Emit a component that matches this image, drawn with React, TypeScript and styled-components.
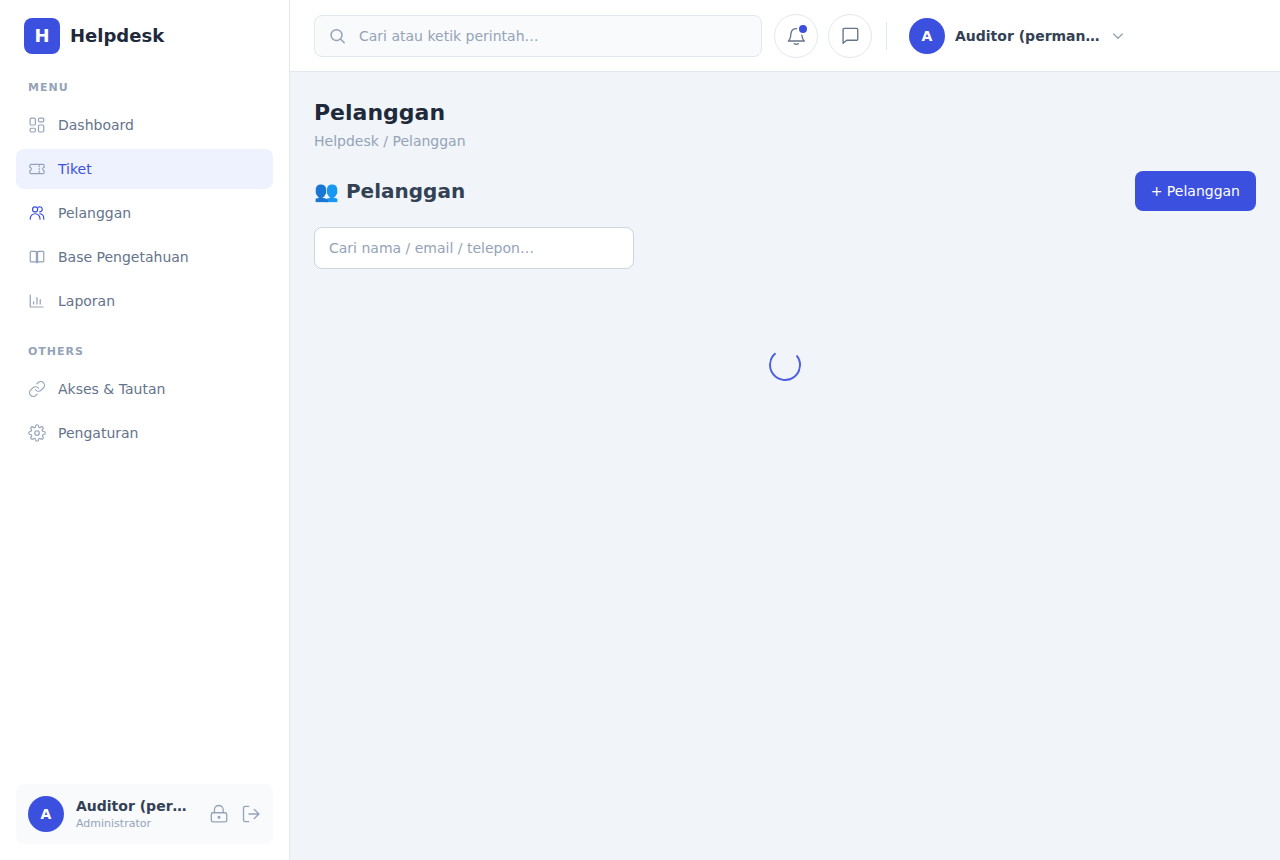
import React from "react";
import styled, { createGlobalStyle } from "styled-components";

const c = {
  primary: "#3c50e0",
  primarySoft: "#eef2ff",
  ink: "#1e293b",
  heading: "#334155",
  text: "#64748b",
  muted: "#94a3b8",
  line: "#e2e8f0",
  inputLine: "#cbd5e1",
  soft: "#f8fafc",
  page: "#f1f5f9",
};

const GlobalStyle = createGlobalStyle`
  *, *::before, *::after { box-sizing: border-box; }
  body {
    margin: 0;
    background: ${c.page};
    color: ${c.ink};
    font-family: "DejaVu Sans", Verdana, sans-serif;
    font-size: 14px;
    line-height: 20px;
  }
  button, input { font: inherit; }
  button { cursor: pointer; }
  h1, h2, p, ul { margin: 0; padding: 0; }
`;

const Shell = styled.div`
  display: grid;
  grid-template-columns: 290px minmax(0, 1fr);
  min-height: 100vh;
`;

const Sidebar = styled.aside`
  display: flex;
  flex-direction: column;
  height: 100vh;
  position: sticky;
  top: 0;
  padding: 18px 16px 16px;
  background: #fff;
  border-right: 1px solid ${c.line};
`;

const Brand = styled.a`
  display: flex;
  align-items: center;
  gap: 10px;
  padding: 0 8px;
  color: ${c.ink};
  font-size: 18px;
  font-weight: 700;
  text-decoration: none;
`;

const BrandMark = styled.span`
  display: grid;
  place-items: center;
  width: 36px;
  height: 36px;
  border-radius: 8px;
  background: ${c.primary};
  color: #fff;
`;

const Nav = styled.nav`
  display: flex;
  flex-direction: column;
  gap: 21px;
  flex: 1;
  padding-top: 24px;
`;

const NavTitle = styled.h2`
  padding: 0 12px;
  margin-bottom: 7px;
  color: ${c.muted};
  font-size: 11px;
  font-weight: 700;
  letter-spacing: 1px;
  text-transform: uppercase;
`;

const NavList = styled.ul`
  display: flex;
  flex-direction: column;
  gap: 4px;
  list-style: none;
`;

const NavLink = styled.a<{ $active?: boolean; $iconActive?: boolean }>`
  display: flex;
  align-items: center;
  gap: 12px;
  height: 40px;
  padding: 0 12px;
  border-radius: 8px;
  background: ${(p) => (p.$active ? c.primarySoft : "transparent")};
  color: ${(p) => (p.$active ? c.primary : c.text)};
  text-decoration: none;

  svg {
    color: ${(p) => (p.$iconActive ? c.primary : c.muted)};
  }
`;

const Glyph = styled.svg`
  display: block;
  flex: none;
  fill: none;
  stroke: currentColor;
  stroke-linecap: round;
  stroke-linejoin: round;
`;

const Avatar = styled.span`
  display: grid;
  place-items: center;
  flex: none;
  width: 36px;
  height: 36px;
  border-radius: 50%;
  background: ${c.primary};
  color: #fff;
  font-size: 14px;
  font-weight: 700;
`;

const UserCard = styled.div`
  display: flex;
  align-items: center;
  gap: 12px;
  padding: 12px;
  border-radius: 8px;
  background: ${c.soft};
`;

const UserText = styled.div`
  flex: 1;
  min-width: 0;
`;

const UserName = styled.p`
  overflow: hidden;
  color: ${c.heading};
  font-weight: 700;
  text-overflow: ellipsis;
  white-space: nowrap;
`;

const UserRole = styled.p`
  color: ${c.muted};
  font-size: 11px;
  line-height: 16px;
`;

const CardActions = styled.div`
  display: flex;
  gap: 12px;
  padding-left: 4px;
`;

const PlainButton = styled.button`
  padding: 0;
  border: 0;
  background: none;
  color: ${c.muted};
`;

const Column = styled.div`
  display: flex;
  flex-direction: column;
  min-width: 0;
`;

const Header = styled.header`
  display: flex;
  align-items: center;
  gap: 12px;
  height: 72px;
  padding: 0 24px;
  background: #fff;
  border-bottom: 1px solid ${c.line};
`;

const SearchBox = styled.label`
  display: flex;
  align-items: center;
  gap: 12px;
  flex: 0 1 448px;
  height: 42px;
  padding: 0 14px;
  border: 1px solid ${c.line};
  border-radius: 8px;
  background: ${c.soft};
  color: ${c.muted};
`;

const SearchInput = styled.input`
  flex: 1;
  min-width: 0;
  padding: 0;
  border: 0;
  outline: 0;
  background: none;
  color: ${c.ink};

  &::placeholder {
    color: ${c.muted};
    opacity: 1;
  }
`;

const HeaderTools = styled.div`
  display: flex;
  align-items: center;
  gap: 10px;
`;

const RoundButton = styled.button`
  position: relative;
  display: grid;
  place-items: center;
  width: 44px;
  height: 44px;
  padding: 0;
  border: 1px solid ${c.line};
  border-radius: 50%;
  background: #fff;
  color: ${c.text};
`;

const Dot = styled.span`
  position: absolute;
  top: 8px;
  right: 8px;
  width: 12px;
  height: 12px;
  border: 2px solid #fff;
  border-radius: 50%;
  background: ${c.primary};
`;

const Divider = styled.span`
  width: 1px;
  height: 28px;
  margin: 0 12px 0 4px;
  background: ${c.line};
`;

const UserButton = styled.button`
  display: flex;
  align-items: center;
  gap: 10px;
  padding: 0;
  border: 0;
  background: none;
  color: ${c.muted};
`;

const UserButtonName = styled.span`
  max-width: 145px;
  overflow: hidden;
  color: ${c.heading};
  font-weight: 700;
  text-overflow: ellipsis;
  white-space: nowrap;
`;

const Main = styled.main`
  padding: 24px;
`;

const PageTitle = styled.h1`
  font-size: 22px;
  line-height: 33px;
  font-weight: 700;
`;

const Crumbs = styled.p`
  margin: 2px 0 20px;
  color: ${c.muted};
`;

const SectionBar = styled.div`
  display: flex;
  align-items: center;
  justify-content: space-between;
  margin-bottom: 16px;
`;

const SectionTitle = styled.h2`
  color: ${c.heading};
  font-size: 20px;
  line-height: 30px;
  font-weight: 700;
`;

const PrimaryButton = styled.button`
  height: 40px;
  padding: 0 16px;
  border: 0;
  border-radius: 8px;
  background: ${c.primary};
  color: #fff;
`;

const FilterInput = styled.input`
  display: block;
  width: 100%;
  max-width: 320px;
  height: 42px;
  padding: 0 14px;
  border: 1px solid ${c.inputLine};
  border-radius: 8px;
  background: #fff;
  color: ${c.ink};

  &::placeholder {
    color: ${c.muted};
    opacity: 1;
  }
`;

const Loading = styled.div`
  display: flex;
  justify-content: center;
  padding: 80px 0;
`;

const Spinner = styled.span`
  width: 32px;
  height: 32px;
  border: 2px solid ${c.primary};
  border-top-color: transparent;
  border-radius: 50%;
  opacity: 0.9;
  transform: rotate(6deg);
`;

const icons = {
  dashboard: (
    <>
      <rect x="2.8" y="2.7" width="7" height="9.3" rx="1.5" />
      <rect x="14" y="2.7" width="7" height="5" rx="1.5" />
      <rect x="2.8" y="16.3" width="7" height="5" rx="1.5" />
      <rect x="14" y="12" width="7" height="9.3" rx="1.5" />
    </>
  ),
  ticket: (
    <>
      <path d="M4 5.800h16a1.500 1.500 0 0 1 1.500 1.500v2.700a2 2 0 0 0 0 4v2.700a1.500 1.500 0 0 1-1.500 1.500H4a1.500 1.500 0 0 1-1.500-1.500v-2.700a2 2 0 0 0 0-4V7.300A1.500 1.500 0 0 1 4 5.800Z" />
      <path d="M15 7.500v1.500M15 11.300v1.500M15 15v1.500" />
    </>
  ),
  users: (
    <>
      <circle cx="9.500" cy="7.200" r="3.400" />
      <path d="M3 20.300v-.800a6.500 6.500 0 0 1 13 0v.800" />
      <path d="M14 4.200a3.400 3.400 0 1 1 1.600 6.400M15.800 13a6 6 0 0 1 5.200 6.300v1" />
    </>
  ),
  book: (
    <>
      <path d="M11 5.200A1.500 1.500 0 0 0 9.800 4.500H4.200A1.200 1.200 0 0 0 3 5.700v11.600a1.200 1.200 0 0 0 1.200 1.200h5.600c.800 0 1.600.400 2.200 1.200.600-.800 1.400-1.200 2.200-1.200h5.600a1.200 1.200 0 0 0 1.200-1.200V5.700a1.200 1.200 0 0 0-1.200-1.200h-5.600a1.500 1.500 0 0 0-1.200.700Z" />
      <path d="M11.200 5v14M12.800 5v14" />
    </>
  ),
  chart: <path d="M3 4v16h17M7.500 16v-3M12 16V7.500M16.300 16v-6" />,
  link: (
    <>
      <path d="M10 13a5 5 0 0 0 7.540.540l3-3a5 5 0 0 0-7.070-7.070l-1.720 1.710" />
      <path d="M14 11a5 5 0 0 0-7.540-.540l-3 3a5 5 0 0 0 7.070 7.070l1.710-1.710" />
    </>
  ),
  gear: (
    <>
      <circle cx="12" cy="12" r="3" />
      <path d="M19.400 15a1.650 1.650 0 0 0 .330 1.820l.060.060a2 2 0 1 1-2.830 2.830l-.060-.060a1.650 1.650 0 0 0-2.820 1.170V21a2 2 0 0 1-4 0v-.090A1.650 1.650 0 0 0 9 19.400a1.650 1.650 0 0 0-1.820.330l-.060.060a2 2 0 1 1-2.830-2.830l.060-.060A1.650 1.650 0 0 0 3.090 14H3a2 2 0 0 1 0-4h.090A1.650 1.650 0 0 0 4.600 9a1.650 1.650 0 0 0-.330-1.820l-.060-.060a2 2 0 1 1 2.830-2.830l.060.060A1.650 1.650 0 0 0 10 3.090V3a2 2 0 0 1 4 0v.090a1.650 1.650 0 0 0 2.820 1.170l.060-.060a2 2 0 1 1 2.830 2.830l-.060.060A1.650 1.650 0 0 0 20.910 10H21a2 2 0 0 1 0 4h-.090a1.650 1.650 0 0 0-1.510 1Z" />
    </>
  ),
  lock: (
    <>
      <path d="M6.500 10V7a5.200 5.200 0 0 1 10.500 0v3" />
      <rect x="2.800" y="10.500" width="18.500" height="11" rx="2" />
      <circle cx="12" cy="16" r="1" fill="currentColor" />
    </>
  ),
  logout: <path d="M9.200 21.200H5a2 2 0 0 1-2-2V4.800a2 2 0 0 1 2-2h4.200M9.500 12h12M16 6.500l5.500 5.500L16 17.500" />,
  search: (
    <>
      <circle cx="10" cy="10.800" r="7.300" />
      <path d="m15.300 16 5 5" />
    </>
  ),
  bell: (
    <path d="M2.800 18c1.700-1.300 2.400-2.600 2.700-5.500L6 8.500a6.500 6.500 0 0 1 12.800 0l.500 4c.300 2.900 1 4.200 2.700 5.500ZM10 21.200c1.300.900 3.500.900 4.800 0" />
  ),
  chat: <path d="M5 2.900h15a1.300 1.300 0 0 1 1.300 1.300v11.600a1.300 1.300 0 0 1-1.300 1.300H8L3.700 20.700V4.200A1.300 1.300 0 0 1 5 2.900Z" />,
  chevron: <path d="m5.500 9 6.500 6.500L18.500 9" />,
};

type IconName = keyof typeof icons;

const Icon = ({ name, size = 18, weight = 1.6 }: { name: IconName; size?: number; weight?: number }) => (
  <Glyph width={size} height={size} viewBox="0 0 24 24" strokeWidth={weight} aria-hidden="true">
    {icons[name]}
  </Glyph>
);

type Item = { label: string; icon: IconName; active?: boolean; iconActive?: boolean };

const groups: { title: string; items: Item[] }[] = [
  {
    title: "Menu",
    items: [
      { label: "Dashboard", icon: "dashboard" },
      { label: "Tiket", icon: "ticket", active: true },
      { label: "Pelanggan", icon: "users", iconActive: true },
      { label: "Base Pengetahuan", icon: "book" },
      { label: "Laporan", icon: "chart" },
    ],
  },
  {
    title: "Others",
    items: [
      { label: "Akses & Tautan", icon: "link" },
      { label: "Pengaturan", icon: "gear" },
    ],
  },
];

const userName = "Auditor (permanen)";

export default function App() {
  return (
    <>
      <GlobalStyle />
      <Shell>
        <Sidebar>
          <Brand href="#">
            <BrandMark>H</BrandMark>
            Helpdesk
          </Brand>
          <Nav>
            {groups.map((group) => (
              <div key={group.title}>
                <NavTitle>{group.title}</NavTitle>
                <NavList>
                  {group.items.map((item) => (
                    <li key={item.label}>
                      <NavLink href="#" $active={item.active} $iconActive={item.iconActive}>
                        <Icon name={item.icon} />
                        {item.label}
                      </NavLink>
                    </li>
                  ))}
                </NavList>
              </div>
            ))}
          </Nav>
          <UserCard>
            <Avatar>A</Avatar>
            <UserText>
              <UserName>{userName}</UserName>
              <UserRole>Administrator</UserRole>
            </UserText>
            <CardActions>
              <PlainButton type="button" aria-label="Ganti kata sandi">
                <Icon name="lock" size={20} />
              </PlainButton>
              <PlainButton type="button" aria-label="Keluar">
                <Icon name="logout" size={20} />
              </PlainButton>
            </CardActions>
          </UserCard>
        </Sidebar>
        <Column>
          <Header>
            <SearchBox>
              <Icon name="search" weight={2} />
              <SearchInput type="text" aria-label="Cari" placeholder="Cari atau ketik perintah…" />
            </SearchBox>
            <HeaderTools>
              <RoundButton type="button" aria-label="Notifikasi">
                <Icon name="bell" size={20} />
                <Dot />
              </RoundButton>
              <RoundButton type="button" aria-label="Pesan">
                <Icon name="chat" size={20} />
              </RoundButton>
              <Divider />
              <UserButton type="button">
                <Avatar>A</Avatar>
                <UserButtonName>{userName}</UserButtonName>
                <Icon name="chevron" size={16} weight={2} />
              </UserButton>
            </HeaderTools>
          </Header>
          <Main>
            <PageTitle>Pelanggan</PageTitle>
            <Crumbs>Helpdesk / Pelanggan</Crumbs>
            <SectionBar>
              <SectionTitle>👥 Pelanggan</SectionTitle>
              <PrimaryButton type="button">+ Pelanggan</PrimaryButton>
            </SectionBar>
            <FilterInput type="text" aria-label="Cari pelanggan" placeholder="Cari nama / email / telepon…" />
            <Loading>
              <Spinner role="status" aria-label="Memuat" />
            </Loading>
          </Main>
        </Column>
      </Shell>
    </>
  );
}
